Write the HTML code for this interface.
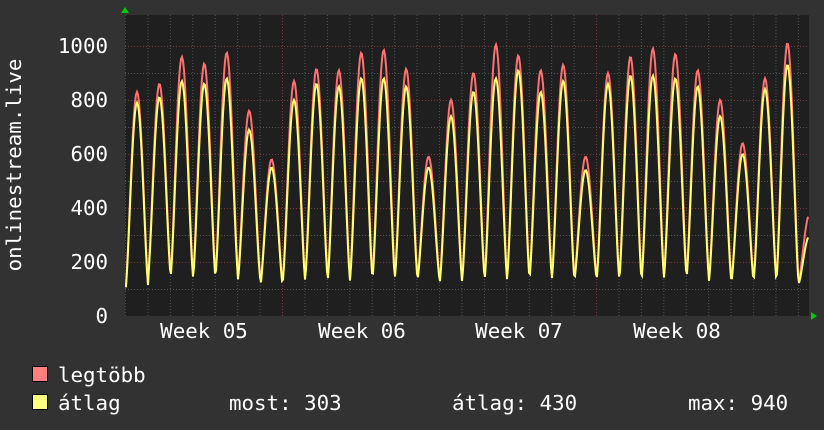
<!DOCTYPE html>
<html><head><meta charset="utf-8"><style>
html,body{margin:0;padding:0;background:#323232;width:824px;height:430px;overflow:hidden}
svg text{font-family:"DejaVu Sans Mono","Liberation Mono",monospace;fill:#fff}
</style></head><body>
<svg id="s" width="824" height="430" xmlns="http://www.w3.org/2000/svg">
<rect x="0" y="0" width="824" height="430" fill="#323232"/>
<rect x="125" y="15" width="684" height="301" fill="#1f1f1f"/>
<g id="grid"></g>
<g id="data"></g>
<polygon points="121,13 125,7 129,13" fill="#0c0"/>
<polygon points="811,312 817,316 811,320" fill="#0c0"/>
<g font-size="20.8" text-anchor="end">
<text x="108" y="53">1000</text>
<text x="108" y="107">800</text>
<text x="108" y="161">600</text>
<text x="108" y="215">400</text>
<text x="108" y="269">200</text>
<text x="108" y="323">0</text>
</g>
<g font-size="20.8" text-anchor="middle">
<text x="204" y="338">Week 05</text>
<text x="362" y="338">Week 06</text>
<text x="519" y="338">Week 07</text>
<text x="677" y="338">Week 08</text>
</g>
<text font-size="20.8" transform="translate(21,165) rotate(-90)" text-anchor="middle">onlinestream.live</text>
<rect x="32.5" y="366.5" width="15" height="15" fill="#ff7f7f" stroke="#000"/>
<rect x="32.5" y="394.5" width="15" height="15" fill="#ffff7f" stroke="#000"/>
<g font-size="20.8">
<text x="58" y="382">legtöbb</text>
<text x="58" y="410">átlag</text>
<text x="229" y="410">most: 303</text>
<text x="452" y="410">átlag: 430</text>
<text x="688" y="410">max: 940</text>
</g>
</svg>
<script>
var ns="http://www.w3.org/2000/svg",g=document.getElementById('grid'),d=document.getElementById('data');
function ln(p,x1,y1,x2,y2,c){var l=document.createElementNS(ns,'line');l.setAttribute('x1',x1);l.setAttribute('y1',y1);l.setAttribute('x2',x2);l.setAttribute('y2',y2);l.setAttribute('stroke',c);l.setAttribute('stroke-dasharray','1,2');p.appendChild(l);}
for(var v=100;v<=1000;v+=100){var y=316-v*0.27+0.5;ln(g,125,y,809,y,(v%200==0)?'#7a3a3a':'#555');}
for(var i=0;i<31;i++){var x=125.5+i*22.43;if(x>809)break;ln(g,x,15,x,316,(i%7==0)?'#7a3a3a':'#555');}
var Y=function(v){return 316-v*0.27;};
var pk=[830,860,960,935,975,760,580,870,915,910,975,985,915,590,800,900,1005,965,910,930,590,900,960,990,970,910,800,640,880,1010,380];
var av=[790,810,870,860,880,690,550,800,860,850,880,880,850,550,740,830,880,910,830,870,540,860,890,890,880,850,740,600,840,930,300];
var mn=[110,150,145,140,150,135,110,130,140,130,140,140,145,130,125,140,135,140,140,140,135,140,130,140,150,140,130,125,140,120,120];
function path(arr,off){var s='';for(var x=125;x<=808;x++){var t=(x-137)/22.43;var k=Math.floor(t+0.5);var kk=Math.max(0,Math.min(30,k));var f=t-k;
var base=mn[kk]*(off?1:1.08);var peak=arr[kk];var c=(1+Math.cos(2*Math.PI*f))/2;var sh=Math.pow(c,0.7);var v=base+(peak-base)*sh;
if(x<127)v=110;s+=(s?'L':'M')+x+','+Y(v).toFixed(1);}return s;}
function pth(dd,c,w){var p=document.createElementNS(ns,'path');p.setAttribute('d',dd);p.setAttribute('stroke',c);p.setAttribute('stroke-width',w);p.setAttribute('fill','none');d.appendChild(p);}
pth(path(pk,0),'#ff7070',2);
pth(path(av,1),'#ffff70',2);
</script>
</body></html>
